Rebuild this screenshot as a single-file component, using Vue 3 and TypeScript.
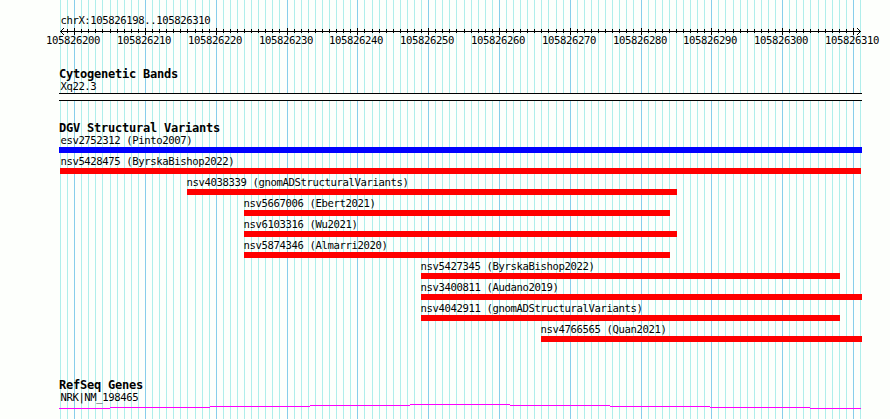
<script setup lang="ts">
interface Variant {
  id: string
  study: string
  start: number
  end: number
  labelX: number
  kind: 'gain' | 'loss'
}

const PANEL_LEFT = 60
const PANEL_WIDTH = 800
const REGION_START = 105826198
const REGION_END = 105826310
const BASES = REGION_END - REGION_START + 1

const positions = Array.from({ length: BASES + 1 }, (_, i) => {
  const base = REGION_START + i
  return {
    base,
    major: base % 10 === 0,
    x: Math.round(PANEL_LEFT + (i * PANEL_WIDTH) / BASES),
  }
})
const minor = positions.filter((p) => !p.major)
const major = positions.filter((p) => p.major)
const ticks = positions.slice(1, -1)

const variants: Variant[] = [
  { id: 'esv2752312', study: 'Pinto2007', start: 59, end: 862, labelX: 60.4, kind: 'gain' },
  { id: 'nsv5428475', study: 'ByrskaBishop2022', start: 60, end: 861, labelX: 60.4, kind: 'loss' },
  { id: 'nsv4038339', study: 'gnomADStructuralVariants', start: 187, end: 677, labelX: 186.6, kind: 'loss' },
  { id: 'nsv5667006', study: 'Ebert2021', start: 244, end: 670, labelX: 243.6, kind: 'loss' },
  { id: 'nsv6103316', study: 'Wu2021', start: 244, end: 677, labelX: 243.6, kind: 'loss' },
  { id: 'nsv5874346', study: 'Almarri2020', start: 244, end: 670, labelX: 243.6, kind: 'loss' },
  { id: 'nsv5427345', study: 'ByrskaBishop2022', start: 421, end: 840, labelX: 420.6, kind: 'loss' },
  { id: 'nsv3400811', study: 'Audano2019', start: 421, end: 862, labelX: 420.6, kind: 'loss' },
  { id: 'nsv4042911', study: 'gnomADStructuralVariants', start: 421, end: 840, labelX: 420.6, kind: 'loss' },
  { id: 'nsv4766565', study: 'Quan2021', start: 541, end: 862, labelX: 540.6, kind: 'loss' },
]
</script>

<template>
  <main class="browser">
    <svg class="grid" width="890" height="419" shape-rendering="crispEdges" aria-hidden="true">
      <rect v-for="p in minor" :key="p.base" class="grid-minor" :x="p.x" y="0" width="1" height="419" />
      <rect v-for="p in major" :key="p.base" class="grid-major" :x="p.x" y="0" width="1" height="419" />
    </svg>

    <section class="overview">
      <div class="label region">chrX:105826198..105826310</div>
      <svg class="ruler" width="890" height="22">
        <g shape-rendering="crispEdges">
          <rect x="60" y="4" width="801" height="1" />
          <rect
            v-for="p in ticks"
            :key="p.base"
            :x="p.x"
            :y="p.major ? 1 : 2"
            width="1"
            :height="p.major ? 7 : 4"
          />
          <path d="M61 3h1v1h-1zM62 2h1v1h-1zM63 1h1v1h-1zM61 5h1v1h-1zM62 6h1v1h-1zM63 7h1v1h-1z" />
          <path d="M859 3h1v1h-1zM858 2h1v1h-1zM857 1h1v1h-1zM859 5h1v1h-1zM858 6h1v1h-1zM857 7h1v1h-1z" />
        </g>
        <text v-for="p in major" :key="p.base" class="tick-label" :x="p.x - 28" y="17">{{ p.base }}</text>
      </svg>
    </section>

    <section class="cytobands">
      <h2 class="title">Cytogenetic Bands</h2>
      <div class="label band-name">Xq22.3</div>
      <div class="band"></div>
    </section>

    <section class="variants">
      <h2 class="title">DGV Structural Variants</h2>
      <div v-for="v in variants" :key="v.id" class="variant">
        <div class="label" :style="{ marginLeft: `${v.labelX}px` }">{{ v.id }} ({{ v.study }})</div>
        <div
          class="bar"
          :class="v.kind"
          :style="{ marginLeft: `${v.start}px`, width: `${v.end - v.start}px` }"
        ></div>
      </div>
    </section>

    <section class="genes">
      <h2 class="title">RefSeq Genes</h2>
      <div class="label gene-name">NRK|NM_198465</div>
      <svg class="intron" width="890" height="15" shape-rendering="crispEdges">
        <path
          d="M59 4h51v1h-51zM110 3h100v1h-100zM210 2h100v1h-100zM310 1h100v1h-100zM410 0h100v1h-100zM510 1h100v1h-100zM610 2h100v1h-100zM710 3h100v1h-100zM810 4h51v1h-51z"
        />
      </svg>
    </section>
  </main>
</template>

<style>
body {
  margin: 0;
  background: #fdfffc;
}
</style>

<style scoped>
.browser {
  position: relative;
  width: 890px;
  height: 419px;
  overflow: hidden;
  background: #fdfffc;
  color: #000;
}

.grid {
  position: absolute;
  inset: 0;
}

.grid-minor {
  fill: #afeeeb;
}

.grid-major {
  fill: #87ceeb;
}

.overview,
.cytobands,
.variants,
.genes {
  position: relative;
}

.label,
.tick-label {
  font-family: "DejaVu Sans Mono", monospace;
  font-size: 10.6px;
  letter-spacing: -0.382px;
  white-space: pre;
}

.label {
  height: 13px;
  line-height: 13px;
}

.title {
  margin: 0 0 0 59px;
  height: 13px;
  font-family: "DejaVu Sans Mono", monospace;
  font-size: 12px;
  font-weight: bold;
  line-height: 13px;
  letter-spacing: -0.224px;
  white-space: pre;
}

.overview {
  height: 68px;
  padding-top: 14px;
  box-sizing: border-box;
}

.region,
.band-name,
.gene-name {
  margin-left: 60.4px;
}

.ruler,
.intron {
  display: block;
}

.cytobands {
  height: 54px;
}

.band-name {
  height: 12px;
  line-height: 11px;
}

.band {
  width: 803px;
  height: 8px;
  margin-left: 59px;
  box-sizing: border-box;
  border-top: 1px solid #000;
  border-bottom: 1px solid #000;
  background: #fdfffc;
}

.variants {
  height: 257px;
}

.title + .variant {
  margin-top: -1px;
}

.variant {
  height: 21px;
}

.bar {
  height: 6px;
}

.gain {
  background: #00f;
}

.loss {
  background: #f00;
}

.title + .gene-name {
  margin-top: -1px;
}

.intron path {
  fill: #f0f;
}
</style>
